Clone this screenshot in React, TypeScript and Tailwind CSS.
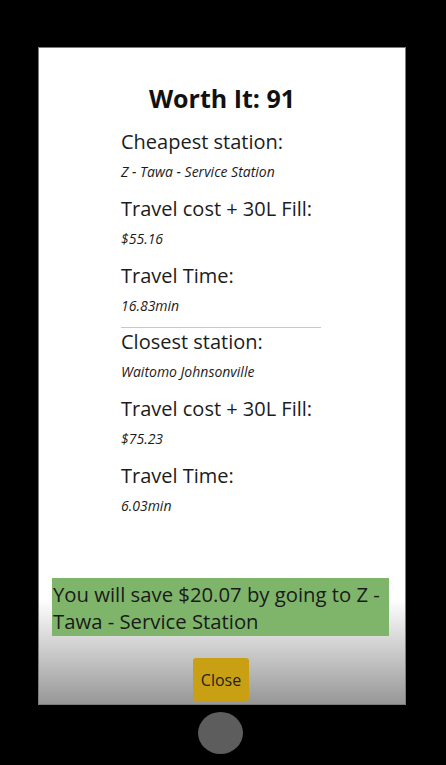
import React from "react";

const groups1 = [
  { label: "Cheapest station:", value: "Z - Tawa - Service Station" },
  { label: "Travel cost + 30L Fill:", value: "$55.16" },
  { label: "Travel Time:", value: "16.83min" },
];
const groups2 = [
  { label: "Closest station:", value: "Waitomo Johnsonville" },
  { label: "Travel cost + 30L Fill:", value: "$75.23" },
  { label: "Travel Time:", value: "6.03min" },
];

function Group({ label, value, first }: { label: string; value: string; first?: boolean }) {
  return (
    <div className={first ? "flex flex-col" : "flex flex-col mt-[13px]"}>
      <div className="text-[20px] leading-[28px] text-[#1c1c1c] whitespace-nowrap">{label}</div>
      <div className="mt-[6px] text-[14px] leading-[20px] italic text-[#1c1c1c] whitespace-nowrap">{value}</div>
    </div>
  );
}

export default function App() {
  return (
    <div className="w-[446px] h-[765px] bg-black flex flex-col font-['Open_Sans',sans-serif] overflow-hidden">
      <div className="ml-[38px] mt-[47px] w-[368px] h-[658px] border border-[#7c7c7c] bg-[linear-gradient(to_bottom,#ffffff_0%,#ffffff_84%,#979797_100%)] flex flex-col">
        <div className="pt-[32px] text-center text-[25px] leading-[36px] font-bold text-[#111]">Worth It: 91</div>
        <div className="mt-[12px] w-[200px] ml-[82px] flex flex-col">
          {groups1.map((g, i) => (
            <Group key={i} label={g.label} value={g.value} first={i === 0} />
          ))}
          <div className="mt-[11px] h-px bg-[#f5c94a]" />
          {groups2.map((g, i) => (
            <Group key={i} label={g.label} value={g.value} first={i === 0} />
          ))}
        </div>
        <div className="mt-[62px] ml-[13px] w-[337px] h-[58px] bg-[#7fb56a] pt-[3px] pl-[1px] text-[20.3px] leading-[27px] text-[#1a1a1a]">
          You will save $20.07 by going to Z - Tawa - Service Station
        </div>
        <button className="mt-[22px] self-center ml-[-2px] w-[56px] h-[43px] rounded-[3px] bg-[#c9a014] text-[16px] text-[#222] flex items-center justify-center">
          Close
        </button>
      </div>
      <div className="mt-[7px] ml-[198px] w-[45px] h-[42px] rounded-[50%] bg-[#5d5d5d]" />
    </div>
  );
}
